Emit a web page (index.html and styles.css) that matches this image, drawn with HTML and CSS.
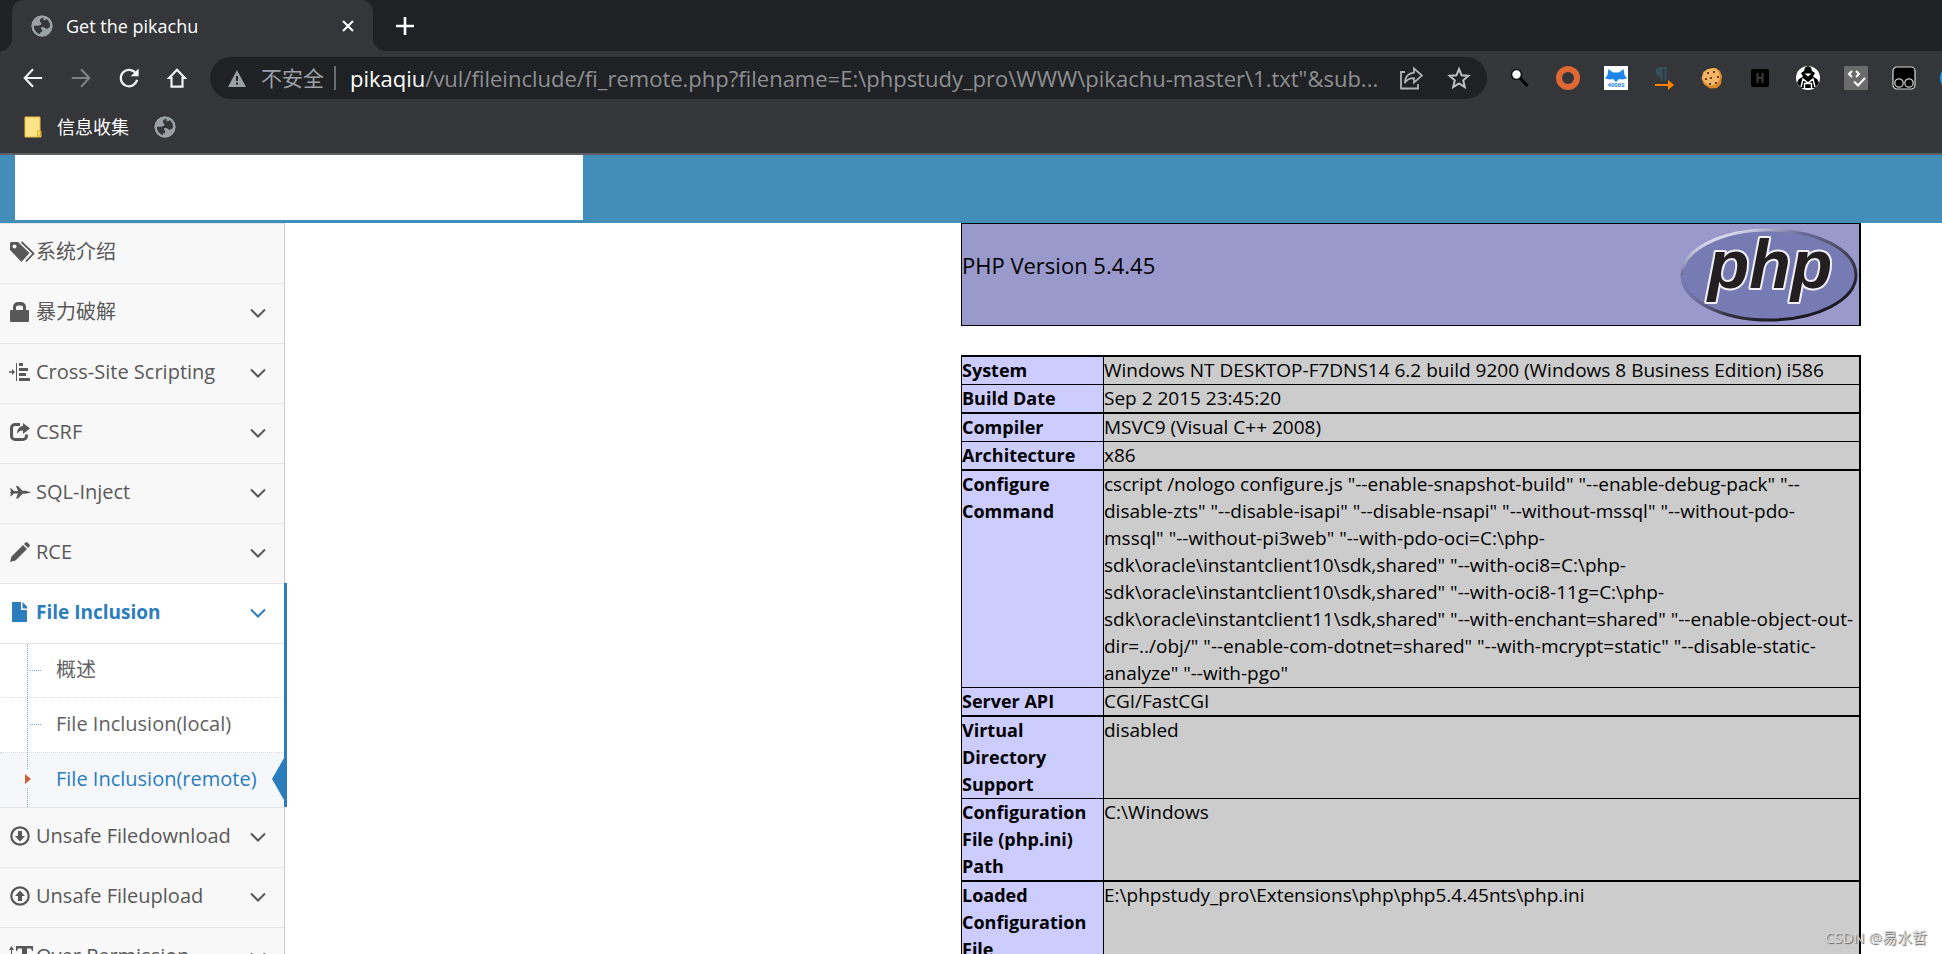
FILE: index.html
```html
<!DOCTYPE html>
<html lang="zh-CN">
<head>
<meta charset="utf-8">
<title>Get the pikachu</title>
<link rel="stylesheet" href="styles.css">
</head>
<body>
<svg class="defs" aria-hidden="true">
  <symbol id="globe" viewBox="0 0 22 22">
    <circle cx="11" cy="11" r="10.5" fill="#9aa0a6"/>
    <path d="M12.5 2.6c-2.6.6-4 1.900-3.600 3.700.3 1.300 1.700 1.200 1.500 2.700-.2 1.300-1.700 1.100-2.600 1.700H3c-.4 4.300 2.300 7.600 6 8.500v-1.600c1.500-.3 2.200-1 2.200-2.200 0-1.400-1.300-1.300-1.200-2.500.1-.8.8-1.100 1.800-1 2.300.2 2.700 2.200 4.700 1.700 1.500-.4 2.600-1.600 2.500-3.300-.2-3.100-1.700-5.300-3.500-6.500-.3 1.600-1.800 1.500-3 1.400z" fill="#35363a"/>
    <circle cx="11" cy="11" r="9.500" fill="none" stroke="#9aa0a6" stroke-width="2"/>
  </symbol>
  <symbol id="chevron" viewBox="0 0 16 10"><path d="M1 1.500l7 7 7-7" fill="none" stroke="currentColor" stroke-width="2"/></symbol>
</svg>

<header class="browser">
  <div class="tabstrip">
    <div class="tab">
      <svg class="favicon"><use href="#globe"/></svg>
      <span class="tab-title">Get the pikachu</span>
      <button class="icon-btn tab-close" aria-label="Close tab"><svg viewBox="0 0 12 12" width="12" height="12"><path d="M1 1l10 10M11 1L1 11" stroke="#fff" stroke-width="2"/></svg></button>
    </div>
    <button class="icon-btn new-tab" aria-label="New tab"><svg viewBox="0 0 18 18" width="18" height="18"><path d="M9 0v18M0 9h18" stroke="#fff" stroke-width="2.600"/></svg></button>
  </div>

  <div class="toolbar">
    <nav class="nav-buttons">
      <button class="icon-btn" aria-label="Back"><svg viewBox="0 0 24 24"><path d="M12 2.500L3 12l9 9.500M3 12h19" fill="none" stroke="#f1f3f4" stroke-width="2.300"/></svg></button>
      <button class="icon-btn" aria-label="Forward"><svg viewBox="0 0 24 24"><path d="M12 2.500l9 9.500-9 9.500M21 12H2" fill="none" stroke="#808185" stroke-width="2.300"/></svg></button>
      <button class="icon-btn" aria-label="Reload"><svg viewBox="0 0 24 24"><path d="M19.600 7.200A9 9 0 1 0 20.800 14" fill="none" stroke="#f1f3f4" stroke-width="2.400"/><path d="M22.500 1.500v8.700h-8.700z" fill="#f1f3f4"/></svg></button>
      <button class="icon-btn" aria-label="Home"><svg viewBox="0 0 24 24"><path d="M12 3L3.500 12H6v9.500h12V12h2.500z" fill="none" stroke="#f1f3f4" stroke-width="2.400"/></svg></button>
    </nav>
    <div class="omnibox">
      <svg class="warn" viewBox="0 0 18 17"><path d="M9 0l9 17H0z" fill="#9aa0a6"/><path d="M9 6v5M9 12.500v2" stroke="#202124" stroke-width="2"/></svg>
      <span class="insecure">不安全</span>
      <span class="divider"></span>
      <span class="url" role="textbox" aria-label="Address"><span class="host">pikaqiu</span>/vul/fileinclude/fi_remote.php?filename=E:\phpstudy_pro\WWW\pikachu-master\1.txt"&amp;sub...</span>
      <button class="icon-btn" aria-label="Share"><svg viewBox="0 0 24 24"><path d="M6 6H2v16.500h17V18" fill="none" stroke="#aeb1b5" stroke-width="1.800"/><path d="M15 2.500l8 7-8 7v-4.300c-4.500 0-7.300 1.500-9.300 4.800.4-6 3.700-9.700 9.300-10.300z" fill="none" stroke="#aeb1b5" stroke-width="1.800"/></svg></button>
      <button class="icon-btn" aria-label="Bookmark"><svg viewBox="0 0 24 24"><path d="M12 3l2.600 6.300 6.800.6-5.200 4.400 1.600 6.700-5.800-3.600L6.200 21l1.600-6.700-5.200-4.400 6.800-.6z" fill="none" stroke="#bdc1c6" stroke-width="2"/></svg></button>
    </div>
    <div class="extensions">
      <button class="icon-btn" aria-label="Search"><svg viewBox="0 0 24 24"><path d="M12 12l7.500 8" stroke="#000" stroke-width="3"/><circle cx="8.500" cy="8.500" r="5" fill="#fff" stroke="#111" stroke-width="1.600"/></svg></button>
      <button class="icon-btn" aria-label="Ring"><svg viewBox="0 0 24 24"><circle cx="12" cy="12" r="9" fill="none" stroke="#df6834" stroke-width="6"/></svg></button>
      <button class="icon-btn" aria-label="Fox"><svg viewBox="0 0 24 24"><path fill="#fff" d="M0 0h24v24H0z"/><path d="M4.500 3L9 6.500h6L19.500 3l1 6 2.500 3.500-5 1-3-.5-3 3-3-3-3 .5-5-1L3.500 9z" fill="#1f86ea"/><text x="12" y="21" class="fox-text">4006S</text></svg></button>
      <button class="icon-btn" aria-label="Pilcrow"><svg viewBox="0 0 24 24"><path d="M15 2H8.500a4 4 0 0 0 0 8H9M9.500 2v13M13.500 2v13" fill="none" stroke="#37505d" stroke-width="1.800"/><path d="M5 5.500A4 4 0 0 1 9 2v8a4 4 0 0 1-4-4.500z" fill="#37505d"/><path d="M3 18h13v-4l6 5-6 5v-4H3z" fill="#ff8400"/></svg></button>
      <button class="icon-btn" aria-label="Cookie"><svg viewBox="0 0 24 24"><path d="M8 3l8-1 4 3 2 5-1 8-4 4-7 .5-6-4L1.500 13 3 6z" fill="#d98729"/><path d="M8 3l7-1 4 4 1 6-3 6-7 2-5-3L2 12l2-6z" fill="#f2b765"/><path d="M7 6h2v2H7zM13 5h2v2h-2zM17 10h2v2h-2zM10 11h2v2h-2zM5 12h2v2H5zM9 17h2v2H9zM15 16h2v2h-2z" fill="#6b3a12"/></svg></button>
      <button class="icon-btn" aria-label="HackBar"><svg viewBox="0 0 24 24"><rect x="3" y="3" width="18" height="18" rx="2" fill="#000"/><path d="M9.500 7v10M14.500 7v10M9.500 12h5" stroke="#3b3b3d" stroke-width="2"/></svg></button>
      <button class="icon-btn" aria-label="Spider"><svg viewBox="0 0 24 24"><circle cx="12" cy="12" r="12" fill="#fff"/><path d="M8 5l1-3.500L12 0l3 1.500L16 5l3 2-2 3.500 4.500 3L23 17l-4 5H5l-4-5 1.500-3.500 4.500-3L5 7z" fill="#000"/><path d="M8.500 7.500h7L12 10.500z" fill="#fff"/><path d="M5 21l2-8 5 4 5-4 2 8M8.500 23v-5.500h7V23" fill="none" stroke="#fff" stroke-width="1.400"/></svg></button>
      <button class="icon-btn" aria-label="Code check"><svg viewBox="0 0 24 24"><rect width="24" height="24" rx="1" fill="#6b6b6b"/><path d="M8 5L5 8l3 3M12 5l3 3-3 3M10 15.500l4 4 7-7.500" fill="none" stroke="#fff" stroke-width="2"/></svg></button>
      <button class="icon-btn" aria-label="Tampermonkey"><svg viewBox="0 0 24 24"><rect x="1" y="1" width="22" height="22" rx="4" fill="#000" stroke="#d8d8d8" stroke-width="1.200"/><g fill="none" stroke="#c4c9c4" stroke-width="1.300"><circle cx="7" cy="17" r="4.200"/><circle cx="17" cy="17" r="4.200"/></g></svg></button>
      <button class="icon-btn" aria-label="More"><svg viewBox="0 0 24 24"><circle cx="12" cy="12" r="12" fill="#2b9bf0"/></svg></button>
    </div>
  </div>

  <div class="bookmarks">
    <button class="bookmark"><svg class="folder" viewBox="0 0 18 22"><path d="M1 1h15v14h1v6H1z" fill="#fee287" stroke="#e8bd3e"/><path d="M13.500 20v-5h3v5z" fill="#fdd868" stroke="#d9a928"/></svg>信息收集</button>
    <button class="icon-btn" aria-label="Site"><svg class="favicon"><use href="#globe"/></svg></button>
  </div>
</header>

<div class="navbar"><div class="brand"></div></div>

<div class="page">
  <aside class="sidebar">
    <ul class="menu">
      <li><a class="item" href="#"><svg class="ico ico-wide" viewBox="0 0 25 20"><path d="M0 1.500C0 .6.600 0 1.500 0H8l11.500 11-8 9L0 8z"/><circle cx="4.500" cy="4.500" r="2" fill="#f8f8f8"/><path d="M11.500 0L23.500 11.500l-7.500 8" fill="none" stroke="currentColor" stroke-width="1.800"/></svg><span class="label">系统介绍</span></a></li>
      <li><a class="item" href="#"><svg class="ico" viewBox="0 0 20 20"><path d="M1 8h2V5a5 5 0 0 1 5-5h3a5 5 0 0 1 5 5v3h2a1 1 0 0 1 1 1v10a1 1 0 0 1-1 1H1a1 1 0 0 1-1-1V9a1 1 0 0 1 1-1zm5 0h7V5.500A2 2 0 0 0 11 3.500H8a2 2 0 0 0-2 2z"/></svg><span class="label">暴力破解</span><svg class="chev"><use href="#chevron"/></svg></a></li>
      <li><a class="item" href="#"><svg class="ico" viewBox="0 0 20 20"><path d="M-1 9.300h3V7l3 3-3 3v-2.300h-3zM6 1h1v18H6zM9 1h4v3H9zM9 6h9v3H9zM9 11h7v3H9zM9 16h11v3H9z"/></svg><span class="label">Cross-Site Scripting</span><svg class="chev"><use href="#chevron"/></svg></a></li>
      <li><a class="item" href="#"><svg class="ico" viewBox="0 0 20 20"><path d="M10 2.500H5A3.500 3.500 0 0 0 1.500 6v8A3.500 3.500 0 0 0 5 17.500h8A3.500 3.500 0 0 0 16.500 14v-1.500" fill="none" stroke="currentColor" stroke-width="3"/><path d="M13 1l7 5.500-7 5.500V8.500c-3 0-4.500 1-6 3.500 0-4.500 2-7.500 6-8z"/></svg><span class="label">CSRF</span><svg class="chev"><use href="#chevron"/></svg></a></li>
      <li><a class="item" href="#"><svg class="ico" viewBox="0 0 20 20"><path d="M0 6l2 1L4 9h4L6 4h2l4.500 4.700h3l6 1.600-6 1.400h-3L8 16.500H6l2-5H4l-2 2-2 1 1-3-1-1 1-1z"/></svg><span class="label">SQL-Inject</span><svg class="chev"><use href="#chevron"/></svg></a></li>
      <li><a class="item" href="#"><svg class="ico" viewBox="0 0 20 20"><path d="M1.500 14.500L13 3l4 4L5.500 18.500 0 20zM14 2l1.500-1.500q1-1 2 0l2 2q1 1 0 2L18 6z"/></svg><span class="label">RCE</span><svg class="chev"><use href="#chevron"/></svg></a></li>
      <li class="open">
        <a class="item" href="#"><svg class="ico" viewBox="0 0 20 20"><path d="M2 0h9v8h6v12H2zM12.500 0L17 4.500V6.500h-4.500z"/></svg><span class="label">File Inclusion</span><svg class="chev"><use href="#chevron"/></svg></a>
        <ul class="submenu">
          <li><a href="#">概述</a></li>
          <li><a href="#">File Inclusion(local)</a></li>
          <li class="active"><a href="#">File Inclusion(remote)</a></li>
        </ul>
      </li>
      <li><a class="item" href="#"><svg class="ico" viewBox="0 0 20 20"><circle cx="10" cy="10" r="8.700" fill="none" stroke="currentColor" stroke-width="2.200"/><path d="M8 5h4v5h3l-5 5.500L5 10h3z"/></svg><span class="label">Unsafe Filedownload</span><svg class="chev"><use href="#chevron"/></svg></a></li>
      <li><a class="item" href="#"><svg class="ico" viewBox="0 0 20 20"><circle cx="10" cy="10" r="8.700" fill="none" stroke="currentColor" stroke-width="2.200"/><path d="M8 15h4v-5h3l-5-5.500L5 10h3z"/></svg><span class="label">Unsafe Fileupload</span><svg class="chev"><use href="#chevron"/></svg></a></li>
      <li><a class="item" href="#"><svg class="ico ico-wide" viewBox="0 0 25 20"><path d="M1.500 2v16" stroke="currentColor"/><path d="M-1 4l2.500-4L4 4zM-1 16l2.500 4L4 16zM6 0h17v5h-1l-1-2.500h-4V18l2 1v1h-9v-1l2-1V2.500H8L7 5H6z"/></svg><span class="label">Over Permission</span><svg class="chev"><use href="#chevron"/></svg></a></li>
    </ul>
  </aside>

  <main class="content">
    <div class="phpinfo">
      <div class="php-head">
        <h1>PHP Version 5.4.45</h1>
        <svg class="php-logo" viewBox="0 0 178 94" role="img" aria-label="PHP logo">
          <defs><linearGradient id="rim" x1="0.300" y1="0" x2="0.850" y2="0.800"><stop offset="0" stop-color="#e4e4f4"/><stop offset=".25" stop-color="#6a6c98"/><stop offset=".55" stop-color="#4a4a62"/><stop offset="1" stop-color="#1c1a20"/></linearGradient>
          <linearGradient id="fade" x1="0" x2="1" y1="0" y2="0"><stop offset="0" stop-color="#777bb3"/><stop offset=".5" stop-color="#777bb3" stop-opacity="0"/></linearGradient></defs>
          <ellipse cx="89" cy="47" rx="87" ry="45" fill="#777bb3" stroke="url(#rim)" stroke-width="3"/>
          <path d="M2 47a87 45 0 0 0 87 45" fill="none" stroke="url(#fade)" stroke-width="3"/>
          <text x="90" y="60" class="php-word">php</text>
        </svg>
      </div>
      <table class="info">
        <tr><th scope="row">System</th><td>Windows NT DESKTOP-F7DNS14 6.2 build 9200 (Windows 8 Business Edition) i586</td></tr>
        <tr><th scope="row">Build Date</th><td>Sep 2 2015 23:45:20</td></tr>
        <tr><th scope="row">Compiler</th><td>MSVC9 (Visual C++ 2008)</td></tr>
        <tr><th scope="row">Architecture</th><td>x86</td></tr>
        <tr><th scope="row">Configure Command</th><td>cscript /nologo configure.js "--enable-snapshot-build" "--enable-debug-pack" "--<br>disable-zts" "--disable-isapi" "--disable-nsapi" "--without-mssql" "--without-pdo-<br>mssql" "--without-pi3web" "--with-pdo-oci=C:\php-<br>sdk\oracle\instantclient10\sdk,shared" "--with-oci8=C:\php-<br>sdk\oracle\instantclient10\sdk,shared" "--with-oci8-11g=C:\php-<br>sdk\oracle\instantclient11\sdk,shared" "--with-enchant=shared" "--enable-object-out-<br>dir=../obj/" "--enable-com-dotnet=shared" "--with-mcrypt=static" "--disable-static-<br>analyze" "--with-pgo"</td></tr>
        <tr><th scope="row">Server API</th><td>CGI/FastCGI</td></tr>
        <tr><th scope="row">Virtual Directory Support</th><td>disabled</td></tr>
        <tr><th scope="row">Configuration File (php.ini) Path</th><td>C:\Windows</td></tr>
        <tr><th scope="row">Loaded Configuration File</th><td>E:\phpstudy_pro\Extensions\php\php5.4.45nts\php.ini</td></tr>
      </table>
    </div>
  </main>
</div>
<div class="watermark">CSDN @易水哲</div>
</body>
</html>
```
FILE: styles.css
```css
* { box-sizing: border-box; }

body {
  margin: 0;
  height: 100vh;
  overflow: hidden;
  position: relative;
  display: flex;
  flex-direction: column;
  background: #fff;
  font-family: "Open Sans", "Noto Sans CJK SC", sans-serif;
}

ul { list-style: none; margin: 0; padding: 0; }
a { color: inherit; text-decoration: none; }
svg { display: block; flex: none; }
.defs { position: absolute; width: 0; height: 0; }

.icon-btn {
  display: flex;
  flex: none;
  align-items: center;
  justify-content: center;
  width: 24px;
  height: 24px;
  padding: 0;
  border: 0;
  background: none;
}

/* Browser chrome */
.browser {
  flex: none;
  background: #35363a;
  border-bottom: 2px solid #5f6063;
}
.tabstrip {
  display: flex;
  align-items: center;
  height: 51px;
  padding-left: 12px;
  background: #202124;
}
.tab {
  position: relative;
  display: flex;
  align-items: center;
  width: 361px;
  height: 51px;
  padding: 0 13px 0 19px;
  border-radius: 12px 12px 0 0;
  background: #35363a;
}
.tab::before,
.tab::after {
  content: "";
  position: absolute;
  bottom: 0;
  width: 12px;
  height: 12px;
}
.tab::before { right: 100%; background: radial-gradient(circle at 0 0, #202124 12px, #35363a 12px); }
.tab::after { left: 100%; background: radial-gradient(circle at 100% 0, #202124 12px, #35363a 12px); }
.favicon { width: 22px; height: 22px; }
.tab-title {
  flex: 1;
  margin-left: 13px;
  font-size: 18px;
  line-height: 24px;
  color: #fff;
}
.new-tab { margin-left: 20px; }

.toolbar {
  display: flex;
  align-items: center;
  gap: 21px;
  height: 54px;
  padding-left: 21px;
}
.nav-buttons { display: flex; gap: 24px; }
.nav-buttons svg { width: 22px; height: 22px; }
.omnibox .icon-btn svg,
.extensions svg { width: 24px; height: 24px; }
.omnibox {
  display: flex;
  flex: 1;
  align-items: center;
  min-width: 0;
  height: 42px;
  padding: 0 16px 0 18px;
  border-radius: 21px;
  background: #202124;
  color: #8d8f92;
}
.omnibox .icon-btn + .icon-btn { margin-left: 24px; }
.warn { width: 18px; height: 17px; }
.insecure {
  margin-left: 15px;
  font-size: 21px;
  line-height: 30px;
  white-space: nowrap;
  color: #9aa0a6;
}
.divider { flex: none; width: 2px; height: 24px; margin: 0 14px 0 10px; background: #6a6c70; }
.url {
  flex: 1;
  min-width: 0;
  overflow: hidden;
  white-space: nowrap;
  font-size: 22px;
  line-height: 30px;
}
.host { color: #fff; }
.extensions {
  display: flex;
  flex: 0 0 434px;
  gap: 24px;
  overflow: hidden;
}
.fox-text { font: 700 6px "Open Sans", sans-serif; text-anchor: middle; fill: #1f86ea; }

.bookmarks {
  display: flex;
  align-items: center;
  gap: 24px;
  height: 48px;
  padding: 0 0 4px 24px;
}
.bookmark {
  display: flex;
  align-items: center;
  gap: 15px;
  padding: 0;
  border: 0;
  background: none;
  color: #fff;
  font-family: inherit;
  font-size: 18px;
  line-height: 24px;
}
.folder { width: 18px; height: 22px; }

/* Site header */
.navbar { flex: none; padding: 0 0 3px 15px; background: #438eb9; }
.brand { width: 568px; height: 65px; background: #fff; }

.page { display: flex; flex: 1; min-height: 0; }

/* Sidebar */
.sidebar {
  flex: 0 0 285px;
  border-right: 1px solid #ccc;
  background: #f8f8f8;
  color: #585858;
  font-size: 20px;
}
.menu > li { position: relative; border-top: 1px solid #e5e5e5; }
.item {
  display: flex;
  align-items: center;
  height: 59px;
  padding: 0 18px 4px 10px;
}
.ico { width: 20px; height: 20px; margin-right: 6px; fill: currentColor; overflow: visible; }
.ico-wide { width: 25px; margin-right: 1px; }
.label { flex: 1; line-height: 28px; }
.chev { width: 16px; height: 10px; margin-top: 2px; }

.open > .item { background: #fff; color: #2b7dbc; font-size: 19px; font-weight: 700; }
.open::after {
  content: "";
  position: absolute;
  top: -1px;
  bottom: 0;
  right: -3px;
  width: 3px;
  background: #2b7dbc;
}
.submenu { position: relative; border-top: 1px solid #e5e5e5; background: #fff; }
.submenu::before {
  content: "";
  position: absolute;
  z-index: 1;
  top: 0;
  bottom: 0;
  left: 27px;
  border-left: 1px dotted #7ea6c4;
}
.submenu li { position: relative; color: #616161; }
.submenu li + li { border-top: 1px dotted #ddd; }
.submenu a { display: block; padding: 12px 0 14px 56px; line-height: 28px; }
.submenu li:first-child a { padding-bottom: 13px; }
.submenu li::before {
  content: "";
  position: absolute;
  top: 26px;
  left: 30px;
  width: 11px;
  border-top: 1px dotted #7ea6c4;
}
.submenu .active { background: #f5f7fb; color: #2b7dbc; }
.submenu .active::before {
  z-index: 2;
  top: 17px;
  left: 25px;
  width: 6px;
  height: 18px;
  border: 0;
  background: #f5f7fb;
}
.submenu .active a::before {
  content: "";
  position: absolute;
  z-index: 3;
  top: 21px;
  left: 25px;
  border: solid transparent;
  border-width: 5px 0 5px 6px;
  border-left-color: #c86139;
}
.submenu .active::after {
  content: "";
  position: absolute;
  top: 5px;
  right: 0;
  border: solid transparent;
  border-width: 21px 12px 21px 0;
  border-right-color: #2b7dbc;
}

/* phpinfo */
.content { flex: 1; display: flex; justify-content: flex-end; padding-right: 81px; }
.phpinfo { width: 900px; color: #000; }
.php-head {
  display: flex;
  justify-content: space-between;
  align-items: flex-start;
  padding: 4px 1px 3px 0;
  border: 1px solid #000;
  border-right-width: 2px;
  background: #9999cc;
}
.php-head h1 { margin: 22px 0 0; font-size: 22px; line-height: 30px; font-weight: 400; }
.php-logo { width: 178px; height: 94px; overflow: visible; }
.php-word {
  font: italic 700 68px "Liberation Sans", sans-serif;
  text-anchor: middle;
  fill: #231f20;
  stroke: #f0f0f6;
  stroke-width: 4px;
  paint-order: stroke;
  stroke-linejoin: round;
}
.info {
  width: 100%;
  margin-top: 29px;
  table-layout: fixed;
  border-spacing: 0;
  border-right: 2px solid #000;
  font-size: 19px;
  line-height: 27px;
}
.info th,
.info td {
  padding: 0;
  border: solid #000;
  border-width: 1px 0 0 1px;
  text-align: left;
  vertical-align: top;
}
.info tr:nth-child(odd) > * { border-top-width: 2px; }
.info th { width: 142px; padding-right: 10px; background: #ccccff; font-size: 18px; font-weight: 700; }
.info td { background: #ccc; white-space: nowrap; }

.watermark {
  position: absolute;
  right: 15px;
  bottom: 5px;
  font-size: 15px;
  line-height: 24px;
  color: #d8d8d8;
  text-shadow: 1px 1px 1px #666;
}
```
